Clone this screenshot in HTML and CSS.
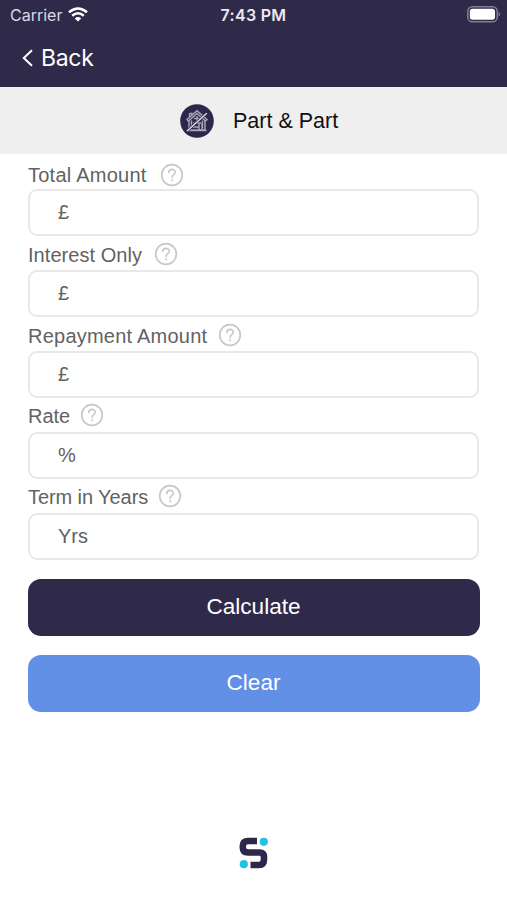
FILE: index.html
```html
<!DOCTYPE html>
<html lang="en">
<head>
<meta charset="utf-8">
<title>Part &amp; Part</title>
<link rel="stylesheet" href="styles.css">
</head>
<body>
<svg width="0" height="0" class="defs" aria-hidden="true">
  <symbol id="help" viewBox="0 0 24 24">
    <circle cx="12" cy="12" r="10.3" fill="none" stroke="#c8c8c8" stroke-width="1.7"/>
    <path d="M8.8 9.6c0-4.2 6.5-4.2 6.5-.4 0 2.5-3.2 2.5-3.2 5.2" fill="none" stroke="#c8c8c8" stroke-width="1.6" stroke-linecap="round"/>
    <circle cx="12.1" cy="17.3" r="1.05" fill="#c8c8c8"/>
  </symbol>
</svg>
<div class="top">
  <div class="status">
    <div class="carrier"><span>Carrier</span>
      <svg width="20" height="15" viewBox="0 0 20 15"><g fill="none" stroke="#fff" stroke-width="2.5"><path d="M1 5.3Q10-2.4 19 5.3"/><path d="M4.2 8.7Q10 3.8 15.8 8.7"/></g><path d="M6.8 11.4Q10 8.7 13.2 11.4L10 14.6Z" fill="#fff"/></svg>
    </div>
    <div class="time">7:43 PM</div>
    <svg class="battery" width="34" height="17" viewBox="0 0 34 17"><rect x=".8" y=".8" width="29.4" height="15" rx="4.6" fill="none" stroke="#827d94" stroke-width="1.5"/><rect x="2.8" y="2.8" width="25.2" height="11" rx="2.8" fill="#fff"/><path d="M31.6 5.8q3 2.4 0 5Z" fill="#827d94"/></svg>
  </div>
  <div class="back">
    <svg width="12" height="18" viewBox="0 0 12 18"><path d="M10 1.2L1.8 9L10 16.8" fill="none" stroke="#fff" stroke-width="2"/></svg>
    <span>Back</span>
  </div>
</div>
<div class="title">
  <svg width="34" height="34" viewBox="0 0 34 34"><circle cx="17" cy="17" r="16.8" fill="#2d274b"/>
    <g fill="none" stroke="#aaa7ba" stroke-width="1.4"><path d="M7 15.5L17 6.7L27 15.5L25.5 17L17 9.5L8.5 17Z"/><path d="M9 17V26H25V17M9.5 9.5V13M9.5 9.5H12V11M11.5 16.5V24M22.5 16.5V24M13 19H21M19 19V26M22 19V26M12 23H19M14 14.5H20M17 12V19M7.5 26.5H26.5"/></g>
    <path d="M7.5 26.5L26.5 9.5" stroke="#2d274b" stroke-width="2.8"/><path d="M7 27L26.8 9.2" stroke="#dddbe5" stroke-width="1.5"/>
  </svg>
  <span>Part &amp; Part</span>
</div>
<div class="form">
  <div class="field total"><div class="label"><span>Total Amount</span><svg class="help"><use href="#help"/></svg></div><div class="input">£</div></div>
  <div class="field interest"><div class="label"><span>Interest Only</span><svg class="help"><use href="#help"/></svg></div><div class="input">£</div></div>
  <div class="field repayment"><div class="label"><span>Repayment Amount</span><svg class="help"><use href="#help"/></svg></div><div class="input">£</div></div>
  <div class="field rate"><div class="label"><span>Rate</span><svg class="help"><use href="#help"/></svg></div><div class="input">%</div></div>
  <div class="field term"><div class="label"><span>Term in Years</span><svg class="help"><use href="#help"/></svg></div><div class="input">Yrs</div></div>
  <div class="button">Calculate</div>
  <div class="button clear">Clear</div>
</div>
<div class="logo">
  <svg width="30" height="32" viewBox="0 0 30 32"><path d="M18 4H9Q3.8 4 3.8 9V10.5Q3.8 15.5 9 15.5H20.5Q25 15.5 25 20V22.5Q25 28 20 28H11.5" fill="none" stroke="#2d274b" stroke-width="6.6"/><circle cx="24.8" cy="4.8" r="4.1" fill="#20c3e3"/><circle cx="4.8" cy="27.2" r="4.1" fill="#20c3e3"/></svg>
</div>
</body>
</html>
```
FILE: styles.css
```css
* { box-sizing: border-box; }
body {
  margin: 0;
  height: 900px;
  background: #fff;
  font-family: "Liberation Sans", Arial, sans-serif;
  color: #626262;
  overflow: hidden;
  display: flex;
  flex-direction: column;
}
.defs { position: absolute; }
svg { display: block; flex: none; }
.top { height: 87px; background: #2f294a; color: #fff; font-family: Inter, sans-serif; }
.status {
  height: 29px;
  padding: 0 8px 0 10px;
  display: grid;
  grid-template-columns: 1fr auto 1fr;
  align-items: center;
  font-size: 16px;
}
.carrier { display: flex; align-items: center; gap: 6px; color: #dcdae3; }
.time { font-weight: 600; color: #eceaf2; letter-spacing: 0.3px; margin-right: 2px; }
.battery { justify-self: end; margin-right: -2px; }
.back { display: flex; align-items: center; gap: 7px; height: 58px; padding-left: 22px; font-size: 23px; letter-spacing: -0.3px; }
.title {
  height: 67px;
  background: #efefef;
  color: #111;
  display: flex;
  align-items: center;
  padding-left: 180px;
  gap: 19px;
  font-size: 21.5px;
}
.title span { padding-top: 2px; }
.form { padding: 1px 27px 0 28px; }
.field { height: 81px; }
.label { height: 34px; display: flex; align-items: center; gap: 13px; padding-top: 6px; font-size: 20px; white-space: nowrap; }
.help { width: 24px; height: 24px; }
.total .label { letter-spacing: 0.25px; }
.interest .label { padding-top: 4px; letter-spacing: 0.05px; gap: 12px; }
.interest .help, .repayment .help, .rate .help, .term .help { margin-bottom: 2px; }
.repayment .label { padding-top: 4px; letter-spacing: 0.23px; gap: 11px; }
.rate .label { padding-top: 2px; gap: 10px; }
.term .label { padding-top: 2px; letter-spacing: -0.08px; gap: 10px; }
.input {
  height: 47px;
  width: 451px;
  border: 2px solid #e8e8e8;
  border-radius: 9px;
  padding-left: 28px;
  display: flex;
  align-items: center;
  font-size: 20px;
}
.button {
  height: 57px;
  margin-top: 19px;
  padding: 0 1px 1px 0;
  border-radius: 13px;
  background: #2f294a;
  color: #fff;
  display: flex;
  align-items: center;
  justify-content: center;
  font-size: 22.6px;
}
.clear { background: #6190e6; }
.logo { margin: auto 0 31px 239px; }
```
